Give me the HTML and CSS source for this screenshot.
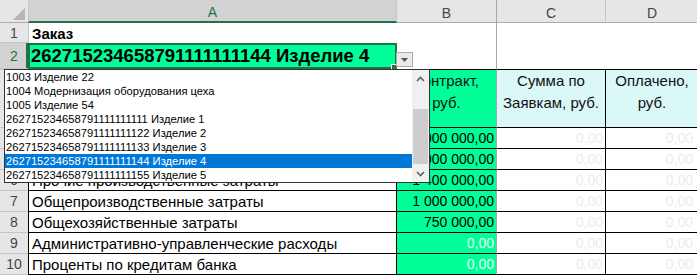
FILE: index.html
```html
<!DOCTYPE html>
<html lang="ru">
<head>
    <meta charset="UTF-8">
    <title>Заказ</title>
    <link rel="stylesheet" href="styles.css">
</head>
<body>
    <div class="sheet">
        <div class="corner">
            <svg width="28" height="22" viewBox="0 0 28 22"><polygon points="25,8 25,20 13,20" fill="#b4b4b4"/></svg>
        </div>
        <div class="col-head first active">A</div>
        <div class="col-head frozen">B</div>
        <div class="col-head">C</div>
        <div class="col-head">D</div>

        <div class="row-head">1</div>
        <div class="cell a title">Заказ</div>
        <div class="cell frozen"></div>
        <div class="cell"></div>
        <div class="cell"></div>

        <div class="row-head active">2</div>
        <div class="cell a order">262715234658791111111144 Изделие 4</div>
        <div class="cell frozen"></div>
        <div class="cell"></div>
        <div class="cell"></div>

        <!-- rows 3-5 sit under the open list -->
        <div class="row-head top-row"></div>
        <div class="cell t top a"></div>
        <div class="cell t top hdr green frozen">Контракт,<br>руб.</div>
        <div class="cell t top hdr cyan">Сумма по<br>Заявкам, руб.</div>
        <div class="cell t top hdr cyan">Оплачено,<br>руб.</div>

        <div class="row-head"></div>
        <div class="cell t a"></div>
        <div class="cell t num green frozen">1 000 000,00</div>
        <div class="cell t num zero">0,00</div>
        <div class="cell t num zero d">0,00</div>

        <div class="row-head"></div>
        <div class="cell t a"></div>
        <div class="cell t num green frozen">2 000 000,00</div>
        <div class="cell t num zero">0,00</div>
        <div class="cell t num zero d">0,00</div>

        <div class="row-head">6</div>
        <div class="cell t a">Прочие производственные затраты</div>
        <div class="cell t num green frozen">1 400 000,00</div>
        <div class="cell t num zero">0,00</div>
        <div class="cell t num zero d">0,00</div>

        <div class="row-head">7</div>
        <div class="cell t a">Общепроизводственные затраты</div>
        <div class="cell t num green frozen">1 000 000,00</div>
        <div class="cell t num zero">0,00</div>
        <div class="cell t num zero d">0,00</div>

        <div class="row-head">8</div>
        <div class="cell t a">Общехозяйственные затраты</div>
        <div class="cell t num green frozen">750 000,00</div>
        <div class="cell t num zero">0,00</div>
        <div class="cell t num zero d">0,00</div>

        <div class="row-head">9</div>
        <div class="cell t a">Административно-управленческие расходы</div>
        <div class="cell t num green frozen zero-b">0,00</div>
        <div class="cell t num zero">0,00</div>
        <div class="cell t num zero d">0,00</div>

        <div class="row-head">10</div>
        <div class="cell t a">Проценты по кредитам банка</div>
        <div class="cell t num green frozen zero-b">0,00</div>
        <div class="cell t num zero">0,00</div>
        <div class="cell t num zero d">0,00</div>

        <!-- cell overlays: fill handle, list button, open list -->
        <div class="fill-handle"></div>
        <div class="dd-button">
            <svg width="7" height="4" viewBox="0 0 7 4"><polygon points="0,0 7,0 3.5,4" fill="#555"/></svg>
        </div>
        <div class="dropdown">
            <ul class="items">
                <li>1003 Изделие 22</li>
                <li>1004 Модернизация оборудования цеха</li>
                <li>1005 Изделие 54</li>
                <li>262715234658791111111111 Изделие 1</li>
                <li>262715234658791111111122 Изделие 2</li>
                <li>262715234658791111111133 Изделие 3</li>
                <li class="selected">262715234658791111111144 Изделие 4</li>
                <li>262715234658791111111155 Изделие 5</li>
            </ul>
            <div class="scrollbar">
                <div class="arrow">
                    <svg width="9" height="6" viewBox="0 0 9 6"><polyline points="1,5 4.5,1.5 8,5" fill="none" stroke="#606060" stroke-width="1.6"/></svg>
                </div>
                <div class="track"><div class="thumb"></div></div>
                <div class="arrow">
                    <svg width="9" height="6" viewBox="0 0 9 6"><polyline points="1,1 4.5,4.5 8,1" fill="none" stroke="#606060" stroke-width="1.6"/></svg>
                </div>
            </div>
        </div>
    </div>
</body>
</html>
```

FILE: styles.css
```css
body {
    margin: 0;
    background-color: #fff;
    overflow: hidden;
}
.sheet {
    position: relative;
    display: grid;
    grid-template-columns: 28px 369px 100px 109px 93px;
    grid-template-rows: 23px 20px 26px 59px repeat(7, 21px);
    width: 697px;
    font-family: "Liberation Sans", Arial, sans-serif;
    font-size: 15px;
    color: #000;
}
.corner,
.col-head,
.row-head,
.cell {
    box-sizing: border-box;
    display: flex;
    align-items: center;
    white-space: nowrap;
    overflow: hidden;
    min-width: 0;
}
.corner {
    background-color: #e6e6e6;
    border-bottom: 1px solid #ababab;
}
.col-head {
    justify-content: center;
    padding-top: 3px;
    background-color: #e6e6e6;
    color: #444;
    font-size: 14px;
    border-bottom: 1px solid #ababab;
    border-right: 1px solid #c6c6c6;
}
.col-head.first {
    border-left: 1px solid #c6c6c6;
}
.col-head.active {
    background-color: #d2d2d2;
    color: #217346;
    border-bottom: 2px solid #217346;
}
.row-head {
    justify-content: center;
    background-color: #e6e6e6;
    color: #444;
    font-size: 14px;
    border-bottom: 1px solid #c6c6c6;
}
.row-head.active {
    background-color: #d2d2d2;
    color: #217346;
    box-shadow: inset -2px 0 #217346;
}
.row-head.top-row {
    border-top: 1px solid #c6c6c6;
}
.cell {
    padding: 0 3px;
}
.cell.a {
    border-left: 1px solid #c6c6c6;
}
.title {
    font-weight: bold;
}
.order {
    background-color: #00ff99;
    font-size: 18.5px;
    font-weight: bold;
    box-shadow: inset 0 0 0 2px #217346;
}
.cell.order {
    border-left: none;
}
.t {
    border-bottom: 1px solid #000;
    border-right: 1px solid #000;
}
.cell.t.a {
    border-left-color: #000;
}
.t.top {
    border-top: 1px solid #000;
}
.cell.frozen,
.col-head.frozen {
    border-right: 1px solid #a6a6a6;
}
.green {
    background-color: #00ff99;
}
.cyan {
    background-color: #daf8f8;
}
.cell.hdr {
    display: block;
    text-align: center;
    line-height: 22px;
    white-space: normal;
    color: #111;
}
.num {
    justify-content: flex-end;
    padding-right: 2px;
    font-size: 14px;
}
.cell.num.d {
    padding-right: 5px;
}
.zero {
    color: #ececec;
}
.zero-b {
    color: #e6fff0;
}
.fill-handle {
    position: absolute;
    left: 391px;
    top: 64px;
    width: 5px;
    height: 5px;
    background-color: #217346;
    border: 1px solid #fff;
}
.dd-button {
    position: absolute;
    left: 396px;
    top: 52px;
    width: 17px;
    height: 15px;
    box-sizing: border-box;
    border: 1px solid #ababab;
    background-color: #eaeaea;
    display: flex;
    align-items: center;
    justify-content: center;
}
.dropdown {
    position: absolute;
    left: 4px;
    top: 69px;
    width: 426px;
    height: 114px;
    box-sizing: border-box;
    border: 1px solid #333;
    background-color: #fff;
    display: flex;
    font-family: "Liberation Sans", Arial, sans-serif;
    font-size: 11.2px;
}
.items {
    list-style: none;
    margin: 0;
    padding: 0;
    flex: 1;
}
.items li {
    height: 14px;
    line-height: 14px;
    padding-left: 1px;
    white-space: nowrap;
}
.items li.selected {
    background-color: #0078d7;
    color: #fff;
}
.scrollbar {
    width: 17px;
    background-color: #f0f0f0;
    display: flex;
    flex-direction: column;
}
.arrow {
    height: 17px;
    display: flex;
    align-items: center;
    justify-content: center;
}
.track {
    flex: 1;
    display: flex;
    flex-direction: column;
    justify-content: flex-end;
    padding: 0 1px 1px;
}
.thumb {
    height: 55px;
    background-color: #cdcdcd;
}
```
